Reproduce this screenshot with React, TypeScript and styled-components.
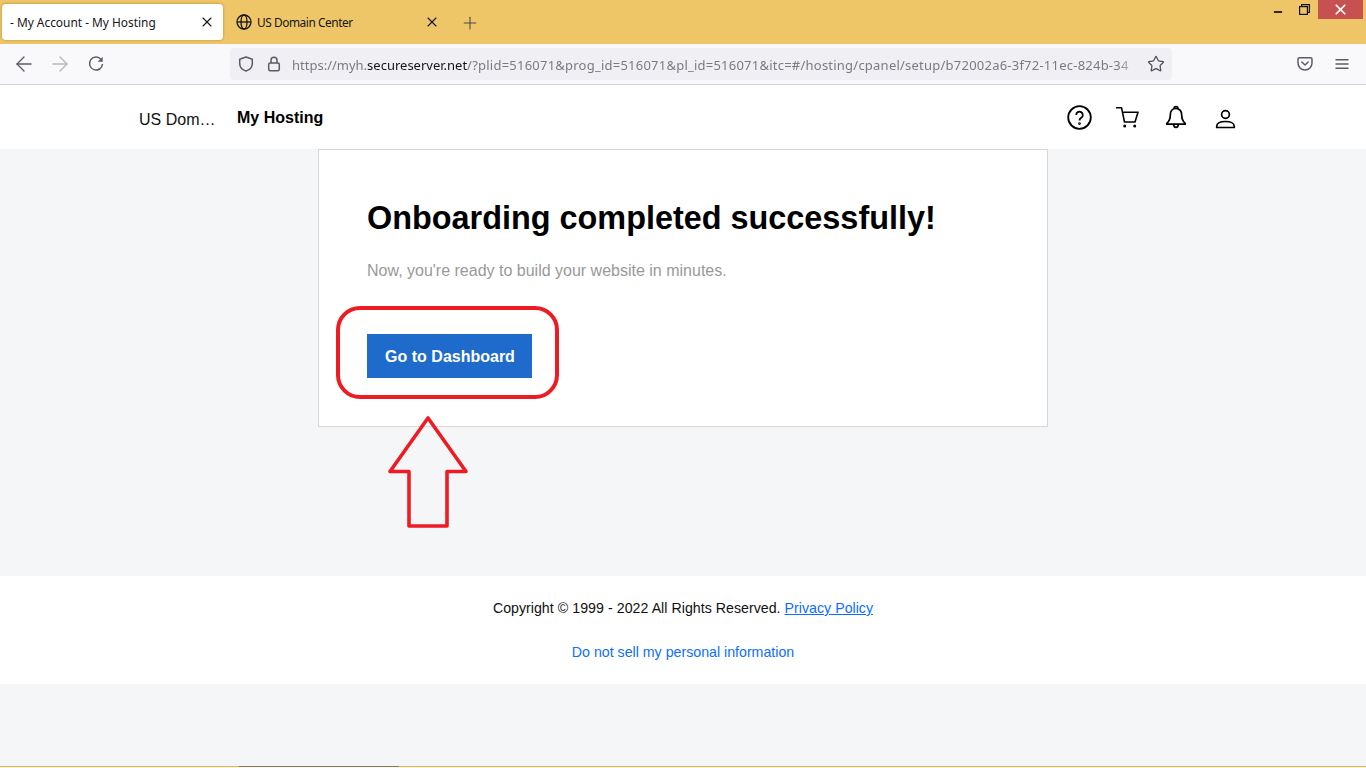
import React from 'react';
import styled, { createGlobalStyle } from 'styled-components';
import { X, Plus, ArrowLeft, ArrowRight, Star, Minus } from 'lucide-react';

const GlobalStyle = createGlobalStyle`
  html, body {
    margin: 0;
    padding: 0;
    height: 100%;
    overflow: hidden;
    background: #f5f6f8;
    font-family: "Liberation Sans", Arial, sans-serif;
  }
`;

const Page = styled.div`
  width: 1366px;
  height: 768px;
  display: flex;
  flex-direction: column;
  overflow: hidden;
`;

/* browser chrome */
const TabBar = styled.div`
  height: 44px;
  flex: none;
  background: #efc667;
  display: flex;
  align-items: flex-start;
  padding: 4px 0 0 2px;
  box-sizing: border-box;
`;

const Tab = styled.div<{ $active?: boolean }>`
  width: ${(p) => (p.$active ? '221px' : '215px')};
  height: 36px;
  box-sizing: border-box;
  display: flex;
  align-items: center;
  padding: ${(p) => (p.$active ? '0 8px 0 8px' : '0 0 0 11px')};
  margin-right: ${(p) => (p.$active ? '2px' : '0')};
  border-radius: 4px;
  background: ${(p) => (p.$active ? '#fff' : 'transparent')};
  box-shadow: ${(p) => (p.$active ? '0 0 3px rgba(90, 70, 20, 0.45)' : 'none')};
  color: #15141a;
  font-family: "Noto Sans", sans-serif;
  font-size: 11.9px;
`;

const TabTitle = styled.span<{ $tight?: boolean }>`
  flex: 1;
  white-space: nowrap;
  letter-spacing: ${(p) => (p.$tight ? '-0.45px' : '0')};
`;

const TabClose = styled(X)`
  width: 16px;
  height: 16px;
  color: #15141a;
  flex: none;
`;

const GlobeIcon = styled.svg`
  width: 16px;
  height: 16px;
  margin-right: 5px;
  flex: none;
`;

const NewTab = styled(Plus)`
  width: 20px;
  height: 20px;
  color: #4a4a4f;
  margin: 8.5px 0 0 20px;
`;

const WindowControls = styled.div`
  margin-left: auto;
  margin-top: -4px;
  display: flex;
  align-items: flex-start;
  color: #111;
`;

const WindowButton = styled.div<{ $close?: boolean }>`
  width: ${(p) => (p.$close ? '45px' : '27px')};
  height: 19px;
  display: flex;
  align-items: center;
  justify-content: center;
  background: ${(p) => (p.$close ? '#c75050' : 'transparent')};
  color: ${(p) => (p.$close ? '#fff' : '#111')};
  margin-right: ${(p) => (p.$close ? '3px' : '0')};
`;

const MinimizeIcon = styled(Minus)`
  margin-top: 5px;
`;

const ToolBar = styled.div`
  height: 41px;
  flex: none;
  box-sizing: border-box;
  background: #f9f9fb;
  border-bottom: 1px solid #cfcfd8;
  display: flex;
  align-items: flex-start;
  padding: 4px 0 0 12px;
  color: #5b5b66;
`;

const NavButton = styled.div<{ $disabled?: boolean }>`
  width: 24px;
  height: 32px;
  margin-right: 12px;
  display: flex;
  align-items: center;
  justify-content: center;
  color: ${(p) => (p.$disabled ? '#b6b6bd' : '#5b5b66')};
`;

const UrlBar = styled.div`
  width: 942px;
  height: 32px;
  box-sizing: border-box;
  margin-left: 110px;
  background: #f0f0f4;
  border-radius: 4px;
  display: flex;
  align-items: center;
  padding: 0 7px 0 8px;
`;

const LockIcon = styled.svg`
  width: 16px;
  height: 16px;
  margin-left: 12px;
  flex: none;
`;

const UrlText = styled.div`
  flex: 1;
  min-width: 0;
  white-space: nowrap;
  font-family: "Noto Sans", sans-serif;
  font-size: 13px;
  color: #7a7a82;
  margin: 1px 5px 0 10px;
  -webkit-mask-image: linear-gradient(to left, transparent 0, #000 24px);
  mask-image: linear-gradient(to left, transparent 0, #000 24px);

  b {
    font-weight: 400;
    color: #15141a;
  }

  span {
    letter-spacing: 0.23px;
  }
`;

const BookmarkStar = styled(Star)`
  width: 18px;
  height: 18px;
  flex: none;
  color: #4f4f59;
`;

const ToolIcons = styled.div`
  margin-left: auto;
  display: flex;
  align-items: center;
  height: 32px;
  gap: 21px;
  padding-right: 16px;
`;

/* site */
const SiteHeader = styled.header`
  height: 64px;
  flex: none;
  background: #fff;
  display: flex;
  align-items: center;
  padding: 0 128px 0 139px;
  color: #111;
`;

const Brand = styled.div`
  width: 76px;
  font-size: 16px;
  white-space: nowrap;
  margin: 5px 22px 0 0;
`;

const SiteTitle = styled.div`
  font-size: 16px;
  font-weight: 700;
  color: #000;
  margin-top: 1px;
`;

const HeaderIcons = styled.div`
  margin-left: auto;
  display: flex;
  align-items: center;
  gap: 23.67px;
`;

const HeaderIcon = styled.svg`
  width: 25px;
  height: 25px;
  display: block;
`;

const Main = styled.main`
  height: 427px;
  flex: none;
  background: #f5f6f8;
  display: flex;
  justify-content: center;
  align-items: flex-start;
`;

const Card = styled.section`
  position: relative;
  width: 730px;
  height: 278px;
  box-sizing: border-box;
  background: #fff;
  border: 1px solid #d6d6d6;
  padding: 49px 48px 0;
`;

const Heading = styled.h1`
  margin: 0;
  font-size: 32.4px;
  line-height: 38px;
  font-weight: 700;
  color: #000;
  white-space: nowrap;
`;

const Lead = styled.p`
  margin: 24px 0 0;
  font-size: 16px;
  line-height: 20px;
  color: #999;
`;

const PrimaryButton = styled.button`
  display: block;
  width: 165px;
  height: 44px;
  margin-top: 53px;
  padding: 2px 0 0 1px;
  border: 0;
  background: #1f6bcc;
  color: #fff;
  font-family: inherit;
  font-size: 16px;
  font-weight: 700;
`;

const Highlight = styled.div`
  position: absolute;
  left: 17px;
  top: 156px;
  width: 223px;
  height: 93px;
  box-sizing: border-box;
  border: 4px solid #ed1c24;
  border-radius: 24px;
`;

const CalloutArrow = styled.svg`
  position: absolute;
  left: 67px;
  top: 263px;
  width: 84px;
  height: 116px;
`;

const Footer = styled.footer`
  height: 108px;
  flex: none;
  background: #fff;
  box-sizing: border-box;
  padding-top: 24px;
  text-align: center;
  font-size: 14.2px;
  line-height: 16px;
  color: #111;
`;

const FooterLine = styled.div`
  margin-bottom: 28px;
  word-spacing: 0.15px;
`;

const FooterLink = styled.a<{ $underline?: boolean }>`
  color: #0d6efd;
  text-decoration: ${(p) => (p.$underline ? 'underline' : 'none')};
`;

const Spacer = styled.div`
  flex: 1;
  background: #f5f6f8;
`;

const TaskStrip = styled.div`
  height: 2px;
  flex: none;
  display: flex;
`;

const StripPart = styled.div<{ $color: string; $line: string; $width?: string }>`
  box-sizing: border-box;
  background: ${(p) => p.$color};
  border-top: 1px solid ${(p) => p.$line};
  width: ${(p) => p.$width || 'auto'};
  flex: ${(p) => (p.$width ? 'none' : '1')};
`;

function App() {
  return (
    <Page>
      <GlobalStyle />
      <TabBar>
        <Tab $active>
          <TabTitle>- My Account - My Hosting</TabTitle>
          <TabClose strokeWidth={1.6} />
        </Tab>
        <Tab>
          <GlobeIcon viewBox="0 0 16 16" fill="none" stroke="#15141a" strokeWidth="1.3">
            <circle cx="8" cy="8" r="7" />
            <ellipse cx="8" cy="8" rx="3" ry="7" />
            <path d="M1 8h14" />
          </GlobeIcon>
          <TabTitle $tight>US Domain Center</TabTitle>
          <TabClose strokeWidth={1.6} />
        </Tab>
        <NewTab strokeWidth={1.3} />
        <WindowControls>
          <WindowButton>
            <MinimizeIcon size={14} strokeWidth={3} strokeLinecap="butt" />
          </WindowButton>
          <WindowButton>
            <svg width="11" height="11" viewBox="0 0 11 11" fill="none" stroke="#111" strokeWidth="1.2">
              <rect x="0.6" y="2.6" width="7.8" height="7.8" />
              <path d="M2.6 2.6V.6h7.8v7.8H8.4" />
            </svg>
          </WindowButton>
          <WindowButton $close>
            <X size={17} strokeWidth={2.4} />
          </WindowButton>
        </WindowControls>
      </TabBar>

      <ToolBar>
        <NavButton>
          <ArrowLeft size={24} strokeWidth={1.4} />
        </NavButton>
        <NavButton $disabled>
          <ArrowRight size={24} strokeWidth={1.4} />
        </NavButton>
        <NavButton>
          <svg width="16" height="16" viewBox="0 0 16 16" fill="none" stroke="#5b5b66" strokeWidth="1.5">
            <path d="M13.200 3.600A6.500 6.500 0 1 0 14.500 8" />
            <path d="M14.700 0.800v4.900H9.800z" fill="#5b5b66" stroke="none" />
          </svg>
        </NavButton>
        <UrlBar>
          <svg width="16" height="16" viewBox="0 0 16 16" fill="none" stroke="#5b5b66" strokeWidth="1.5" strokeLinejoin="round">
            <path d="M8 1l6.300 2.200v4.300c0 3.700-2.700 6.300-6.300 7.500-3.600-1.200-6.300-3.800-6.300-7.500V3.200z" />
          </svg>
          <LockIcon viewBox="0 0 16 16" fill="none" stroke="#5b5b66" strokeWidth="1.5">
            <rect x="2.700" y="7" width="10.600" height="7.700" rx="1.500" />
            <path d="M5 7V4.300a3 3 0 0 1 6 0V7" />
          </LockIcon>
          <UrlText>
            https://myh.<b>secureserver.net</b><span>/?plid=516071&amp;prog_id=516071&amp;pl_id=516071&amp;itc=#/hosting/cpanel/setup/b72002a6-3f72-11ec-824b-34</span>
          </UrlText>
          <BookmarkStar strokeWidth={1.7} />
        </UrlBar>
        <ToolIcons>
          <svg width="16" height="16" viewBox="0 0 16 16" fill="none" stroke="#5b5b66" strokeWidth="1.5" strokeLinejoin="round">
            <path d="M2.500 1.700h11A1.500 1.500 0 0 1 15 3.200V7A7 7 0 0 1 1 7V3.200A1.500 1.500 0 0 1 2.500 1.700z" />
            <path d="M4.800 6l3.200 3 3.200-3" strokeLinecap="round" />
          </svg>
          <svg width="16" height="16" viewBox="0 0 16 16" fill="none" stroke="#5b5b66" strokeWidth="1.4">
            <path d="M1.500 3.700h13M1.500 8h13M1.500 12.300h13" />
          </svg>
        </ToolIcons>
      </ToolBar>

      <SiteHeader>
        <Brand>US Dom…</Brand>
        <SiteTitle>My Hosting</SiteTitle>
        <HeaderIcons>
          <HeaderIcon viewBox="0 0 25 25" fill="none" stroke="#000" strokeWidth="1.8">
            <circle cx="12.500" cy="12.500" r="11.300" />
            <path d="M9.200 10a3.300 3.300 0 1 1 5 2.800c-1.100.7-1.700 1.300-1.700 2.700" />
            <circle cx="12.500" cy="18.600" r="0.500" />
          </HeaderIcon>
          <HeaderIcon viewBox="0 0 25 25" fill="none" stroke="#000" strokeWidth="1.6" strokeLinejoin="round">
            <path d="M0 2.700h5.500l3 14.300h10.500l3-9.800H6.500" />
            <circle cx="8.700" cy="21" r="0.700" fill="#000" />
            <circle cx="18.700" cy="21" r="0.700" fill="#000" />
          </HeaderIcon>
          <HeaderIcon viewBox="0 0 25 25" fill="none" stroke="#000" strokeWidth="1.7" strokeLinejoin="round">
            <path d="M12 3.500c-3.700 0-5.700 2.900-5.700 6.500 0 4.200-1 6.300-3.500 8.300v.9h18.400v-.9c-2.500-2-3.500-4.100-3.500-8.300 0-3.600-2-6.500-5.700-6.500z" />
            <path d="M10 3.700c0-2.800 4-2.800 4 0" />
            <path d="M9.700 19.200c0 4.300 4.600 4.300 4.600 0" />
          </HeaderIcon>
          <HeaderIcon viewBox="0 0 25 25" fill="none" stroke="#000" strokeWidth="1.7" strokeLinejoin="round">
            <circle cx="12.500" cy="9.500" r="3.900" />
            <path d="M3.700 22.500v-1c0-3.300 4-5 8.800-5s8.800 1.700 8.800 5v1z" />
          </HeaderIcon>
        </HeaderIcons>
      </SiteHeader>

      <Main>
        <Card>
          <Heading>Onboarding completed successfully!</Heading>
          <Lead>Now, you're ready to build your website in minutes.</Lead>
          <PrimaryButton>Go to Dashboard</PrimaryButton>
          <Highlight />
          <CalloutArrow viewBox="0 0 84 116" fill="none" stroke="#ed1c24" strokeWidth="3.600" strokeLinejoin="round">
            <path d="M42 5L4 58.500h19V113h38V58.500h19z" />
          </CalloutArrow>
        </Card>
      </Main>

      <Footer>
        <FooterLine>
          Copyright © 1999 - 2022 All Rights Reserved. <FooterLink $underline href="#">Privacy Policy</FooterLink>
        </FooterLine>
        <FooterLink href="#">Do not sell my personal information</FooterLink>
      </Footer>

      <Spacer />
      <TaskStrip>
        <StripPart $color="#fdf3c4" $line="#c9b87c" $width="239px" />
        <StripPart $color="#f9f9fb" $line="#857a55" $width="160px" />
        <StripPart $color="#fdf3c4" $line="#c9b87c" />
      </TaskStrip>
    </Page>
  );
}

export default App;
